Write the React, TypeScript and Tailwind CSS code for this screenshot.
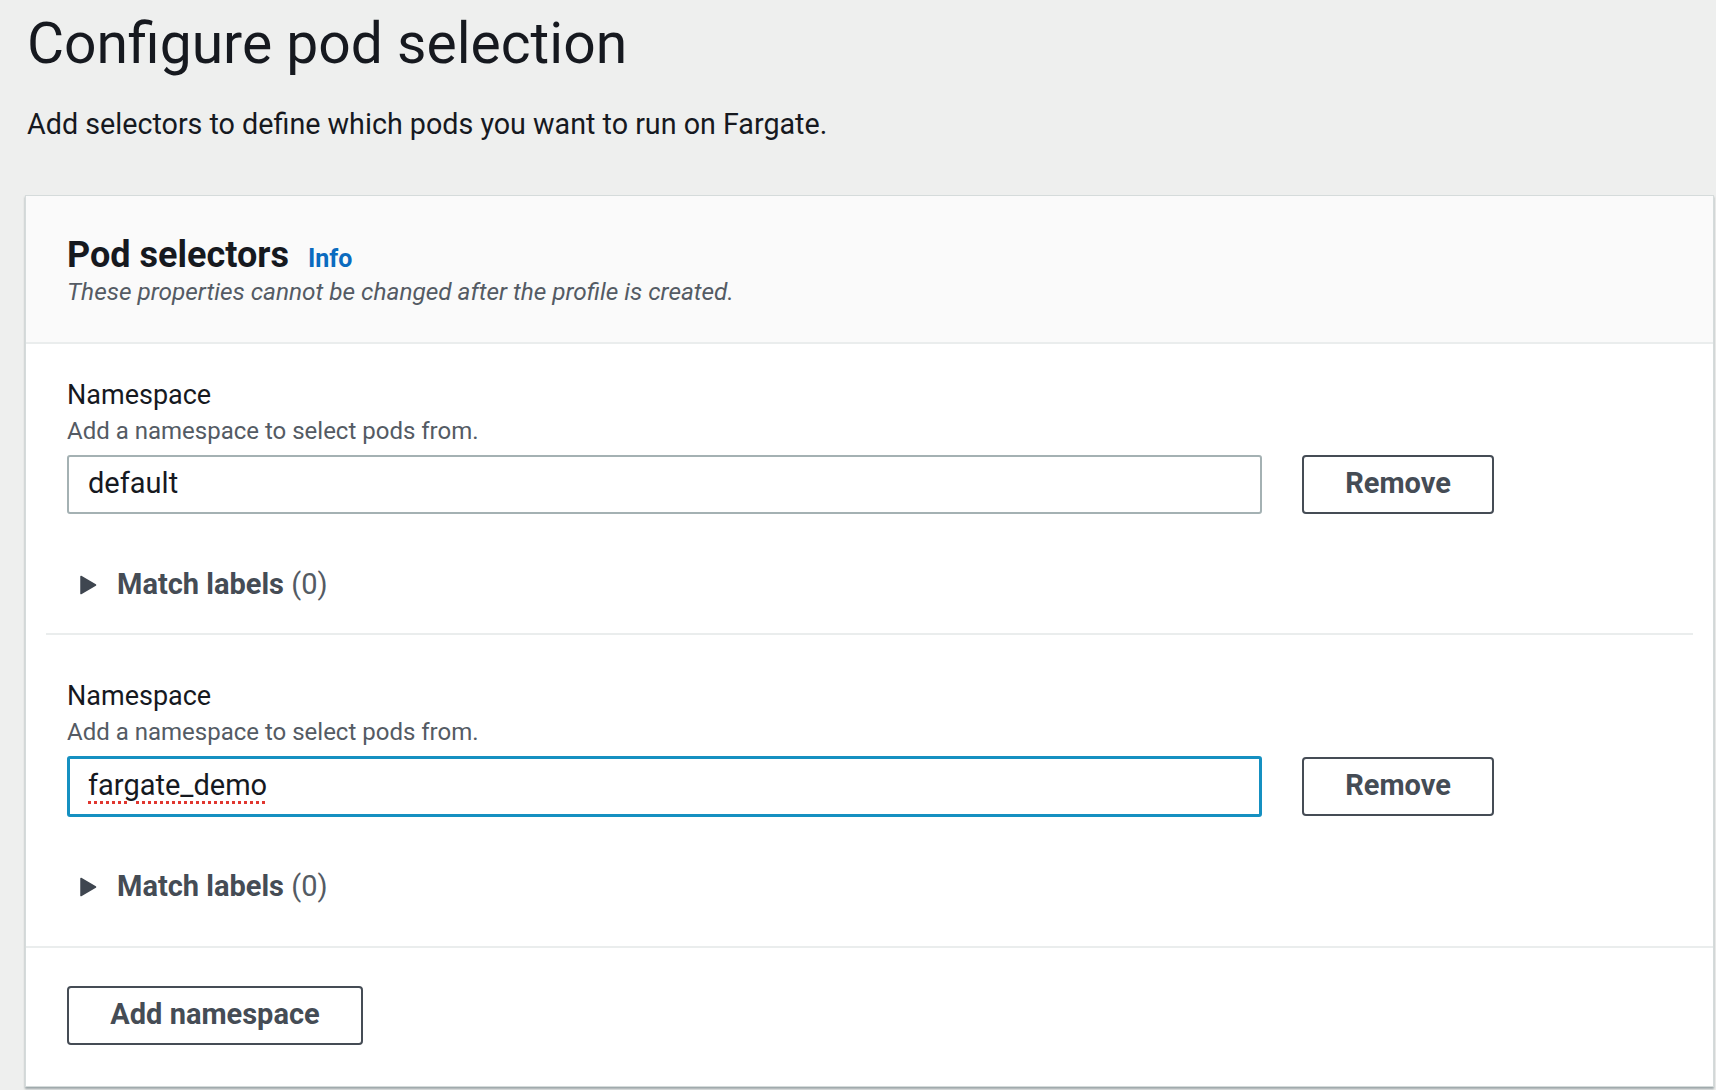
import React from 'react';

function CaretRight() {
  return (
    <svg width="17" height="20" viewBox="0 0 17 20" className="shrink-0">
      <path d="M1 1.5 L15.5 10 L1 18.5 Z" fill="#3f4650" stroke="#3f4650" strokeWidth="1.5" strokeLinejoin="round" />
    </svg>
  );
}

function NamespaceField({ value, focused, last }: { value: string; focused?: boolean; last?: boolean }) {
  return (
    <div className="flex flex-col">
      <div className="text-[27px] leading-[36px] text-[#16191f]">Namespace</div>
      <div className="text-[24px] leading-[36px] text-[#545b64]">Add a namespace to select pods from.</div>
      <div className="mt-[6px] flex items-center gap-[40px]">
        <div
          className={
            focused
              ? 'flex h-[61px] w-[1195px] items-center rounded-[3px] border-[3px] border-[#1590c1] bg-white px-[18px]'
              : 'flex h-[59px] w-[1195px] items-center rounded-[3px] border-[2px] border-[#a4b1b3] bg-white px-[19px]'
          }
        >
          <span
            className={
              focused
                ? 'text-[29px] text-[#16191f] underline decoration-dotted decoration-[#e0362f] decoration-[3px] underline-offset-[6px]'
                : 'text-[29px] text-[#16191f]'
            }
          >
            {value}
          </span>
        </div>
        <button className="flex h-[59px] w-[192px] items-center justify-center rounded-[4px] border-2 border-[#454c55] bg-white text-[29px] font-bold text-[#454c55]">
          Remove
        </button>
      </div>
      <div className={last ? 'mt-[50px] mb-[39px] flex h-[40px] items-center gap-[20px] pl-[13px]' : 'mt-[51px] mb-[28px] flex h-[40px] items-center gap-[20px] pl-[13px]'}>
        <CaretRight />
        <span className="text-[29px] text-[#454c55]">
          <span className="font-bold">Match labels</span> <span className="text-[#545b64]">(0)</span>
        </span>
      </div>
    </div>
  );
}

export default function App() {
  return (
    <div className="min-h-screen bg-[#eeefee] font-['Roboto',sans-serif] pb-[3px]">
      <div className="pl-[27px] pt-[6px]">
        <h1 className="text-[57px] leading-[76px] text-[#16191f]">Configure pod selection</h1>
        <p className="mt-[24px] text-[28.7px] leading-[36px] text-[#16191f]">
          Add selectors to define which pods you want to run on Fargate.
        </p>
      </div>
      <section className="ml-[25px] mr-[2px] mt-[53px] border border-[#d5dbdb] bg-white shadow-[0_2px_2px_rgba(0,28,36,0.35)]">
        <div className="border-b-2 border-[#eaeded] bg-[#fafafa] px-[41px] pt-[38px] pb-[36px]">
          <div className="flex items-baseline gap-[19px]">
            <h2 className="text-[36px] leading-[42px] font-bold text-[#16191f]">Pod selectors</h2>
            <span className="text-[25px] font-bold text-[#0b6bbf]">Info</span>
          </div>
          <p className="text-[24.4px] leading-[28px] italic text-[#545b64]">
            These properties cannot be changed after the profile is created.
          </p>
        </div>
        <div className="px-[20px]">
          <div className="border-b-2 border-[#eaeded] px-[21px] pt-[33px]">
            <NamespaceField value="default" />
          </div>
          <div className="px-[21px] pt-[43px]">
            <NamespaceField value="fargate_demo" focused last />
          </div>
        </div>
        <div className="border-t-2 border-[#eaeded] px-[41px] pt-[38px] pb-[41px]">
          <button className="flex h-[59px] w-[296px] items-center justify-center rounded-[4px] border-2 border-[#454c55] bg-white text-[29px] font-bold text-[#454c55]">
            Add namespace
          </button>
        </div>
      </section>
    </div>
  );
}
